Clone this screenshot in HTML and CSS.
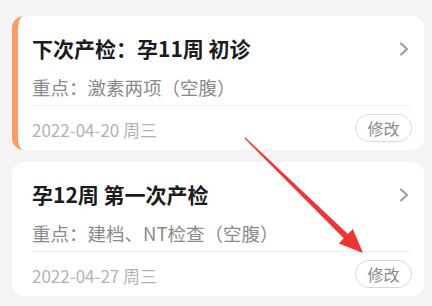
FILE: index.html
```html
<!DOCTYPE html>
<html lang="zh-CN">
<head>
<meta charset="utf-8">
<link rel="stylesheet" href="styles.css">
</head>
<body>
<div class="list">
  <div class="card card-current">
    <div class="head">
      <div class="title">下次产检：孕11周 初诊</div>
      <svg class="chev" width="10" height="14" viewBox="0 0 10 14"><polyline points="2,1.5 8,7 2,12.5" fill="none" stroke="#9a9a9a" stroke-width="2" stroke-linecap="round" stroke-linejoin="round"/></svg>
    </div>
    <div class="sub">重点：激素两项（空腹）</div>
    <div class="divider"></div>
    <div class="foot">
      <div class="date">2022-04-20 周三</div>
      <div class="btn">修改</div>
    </div>
  </div>
  <div class="card">
    <div class="head">
      <div class="title">孕12周 第一次产检</div>
      <svg class="chev" width="10" height="14" viewBox="0 0 10 14"><polyline points="2,1.5 8,7 2,12.5" fill="none" stroke="#9a9a9a" stroke-width="2" stroke-linecap="round" stroke-linejoin="round"/></svg>
    </div>
    <div class="sub">重点：建档、NT检查（空腹）</div>
    <div class="divider"></div>
    <div class="foot">
      <div class="date">2022-04-27 周三</div>
      <div class="btn">修改</div>
    </div>
  </div>
</div>
<svg class="arrow" width="432" height="306" viewBox="0 0 432 306">
  <polygon points="244.6,138.4 245.4,137.6 347.9,234.1 352.8,229.0 363,253 338.8,243.4 343.7,238.3" fill="#f03434"/>
</svg>
</body>
</html>
```
FILE: styles.css
```css
html, body {
  margin: 0;
  padding: 0;
}
body {
  width: 432px;
  height: 306px;
  overflow: hidden;
  background: #f4f4f4;
  font-family: "Noto Sans CJK SC", "Noto Sans", sans-serif;
  position: relative;
}
.list {
  display: flex;
  flex-direction: column;
  gap: 12px;
  padding: 16px 8px 0 12px;
}
.card {
  background: #ffffff;
  border-radius: 12px;
  padding: 18px 14px 8px 20px;
  display: flex;
  flex-direction: column;
}
.card-current {
  border-left: 6px solid #fd9c63;
  padding-left: 14px;
}
.head {
  display: flex;
  align-items: center;
  justify-content: space-between;
  height: 28px;
}
.title {
  font-size: 21px;
  font-weight: bold;
  color: #1c1c1c;
  line-height: 28px;
}
.chev {
  margin-right: 1px;
  margin-top: 2px;
}
.sub {
  margin-top: 13px;
  font-size: 18.5px;
  line-height: 24px;
  color: #8a8a8a;
}
.divider {
  margin-top: 6px;
  height: 1px;
  background: #eeeeee;
}
.foot {
  margin-top: 8px;
  display: flex;
  align-items: center;
  justify-content: space-between;
  height: 28px;
}
.date {
  font-size: 17px;
  line-height: 22px;
  color: #b2b2b2;
  padding-top: 3px;
}
.btn {
  box-sizing: border-box;
  height: 28px;
  width: 57px;
  border: 1px solid #d9d9d9;
  border-radius: 14px;
  font-size: 16px;
  line-height: 26px;
  text-align: center;
  color: #8a8a8a;
  margin-right: -2px;
}
.arrow {
  position: absolute;
  left: 0;
  top: 0;
}
```
